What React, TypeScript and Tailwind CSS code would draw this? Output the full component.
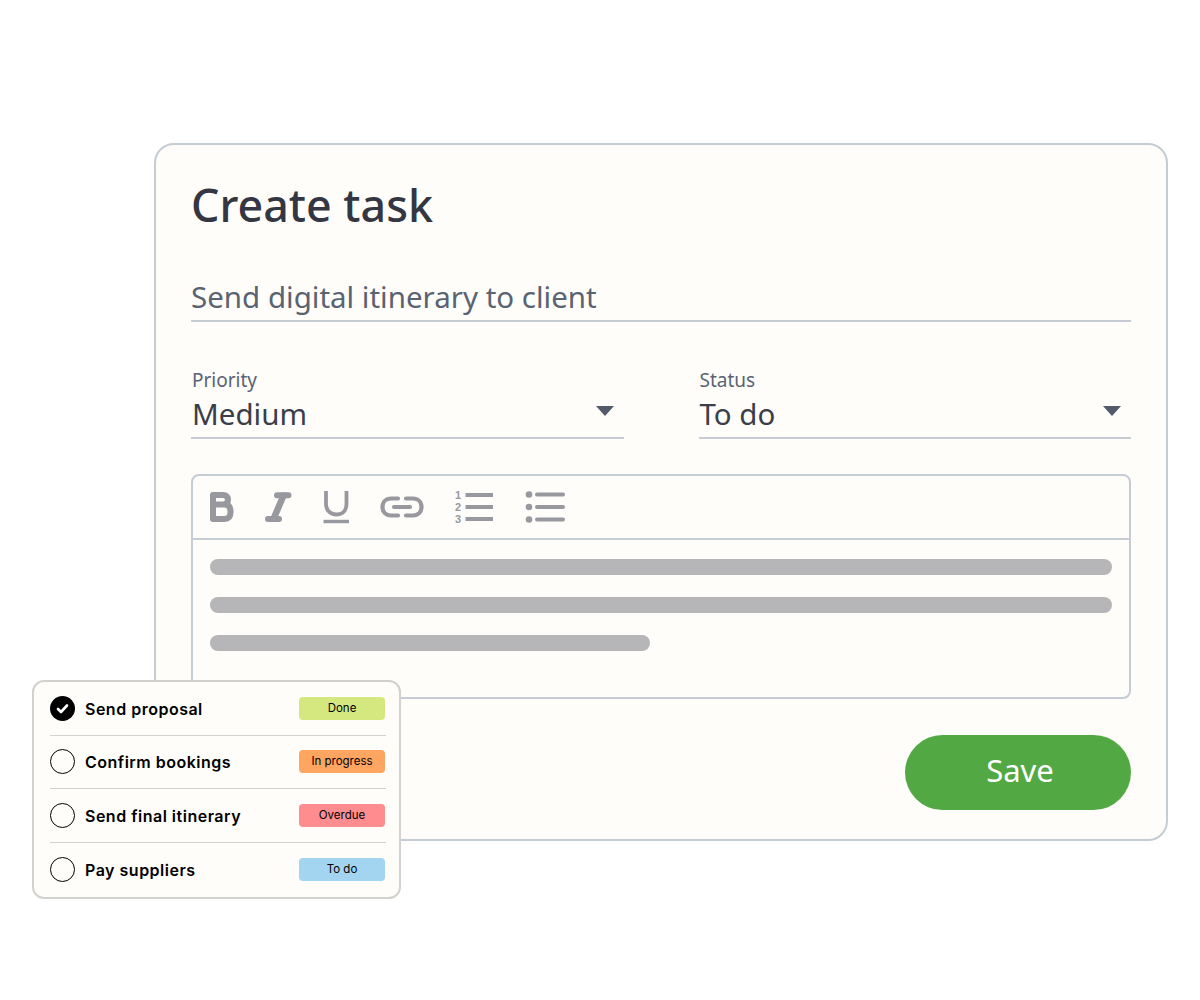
const iconColor = "#98989f";

function BoldIcon() {
  return (
    <svg width="24" height="30" viewBox="0 0 24 30" fill="none" stroke={iconColor} strokeWidth="6" strokeLinejoin="round">
      <path d="M3 3H13C16.5 3 18 5 18 7.8C18 10.6 16.2 12.6 13 12.6H3ZM3 12.6H14.5C18.5 12.6 20.6 15 20.6 19.8C20.6 24.6 18.4 27 14.5 27H3Z" />
    </svg>
  );
}

function ItalicIcon() {
  return (
    <svg width="27" height="30" viewBox="0 0 27 30" fill="none" stroke={iconColor} strokeLinecap="round">
      <path d="M12 3.2H23.5M3 27H14" strokeWidth="6" />
      <path d="M18.5 3.5L8.5 27" strokeWidth="6.5" />
    </svg>
  );
}

function UnderlineIcon() {
  return (
    <svg width="27" height="33" viewBox="0 0 27 33" fill="none" stroke={iconColor} strokeWidth="3.8">
      <path d="M3 0V13C3 19.5 7.5 23.5 13.5 23.5C19.5 23.5 23.5 19.5 23.5 13V0" />
      <path d="M0.5 30.5H26" strokeWidth="3.4" />
    </svg>
  );
}

function LinkIcon() {
  return (
    <svg width="44" height="22" viewBox="0 0 44 22" fill="none" stroke={iconColor} strokeWidth="4.2" strokeLinecap="round">
      <path d="M18 2.5H11C6 2.5 2.5 6 2.5 11C2.5 16 6 19.5 11 19.5H18" />
      <path d="M26 2.5H33C38 2.5 41.5 6 41.5 11C41.5 16 38 19.5 33 19.5H26" />
      <path d="M14 11H30" />
    </svg>
  );
}

function OrderedIcon() {
  return (
    <svg width="40" height="34" viewBox="0 0 40 34" fill="none" stroke={iconColor} strokeWidth="4">
      <path d="M11.5 5H39M11.5 17H39M11.5 29H39" />
      <g fill={iconColor} stroke="none" fontFamily="'Liberation Sans', sans-serif" fontWeight="700" fontSize="11" textAnchor="middle">
        <text x="4" y="9">1</text>
        <text x="4" y="21">2</text>
        <text x="4" y="33">3</text>
      </g>
    </svg>
  );
}

function BulletIcon() {
  return (
    <svg width="40" height="34" viewBox="0 0 40 34" fill="none" stroke={iconColor} strokeWidth="4" strokeLinecap="round">
      <path d="M12 4.5H38M12 17H38M12 29.5H38" />
      <g fill={iconColor} stroke="none">
        <circle cx="4" cy="4.5" r="3.3" />
        <circle cx="4" cy="17" r="3.3" />
        <circle cx="4" cy="29.5" r="3.3" />
      </g>
    </svg>
  );
}

function SelectField({ label, value }: { label: string; value: string }) {
  return (
    <div className="relative h-[72px] flex-1 border-b-2 border-[#c5ccd3]">
      <div className="pl-px pt-px text-[19px] leading-6 text-[#5a6371]">{label}</div>
      <div className="pl-px pt-px text-[29.5px] leading-[42px] text-[#3b3e4a]">{value}</div>
      <div className="absolute right-[10px] top-[39px] h-0 w-0 border-x-[9px] border-t-[10px] border-x-transparent border-t-[#535b6b]" />
    </div>
  );
}

const tasks = [
  { name: "Send proposal", status: "Done", color: "bg-[#d5e87f]", done: true },
  { name: "Confirm bookings", status: "In progress", color: "bg-[#ffa562]", done: false },
  { name: "Send final itinerary", status: "Overdue", color: "bg-[#ff8c8e]", done: false },
  { name: "Pay suppliers", status: "To do", color: "bg-[#a4d5f0]", done: false },
];

function TaskList() {
  return (
    <div className="absolute left-[32px] top-[680px] flex h-[219px] w-[369px] flex-col rounded-[12px] border-2 border-[#d3d1ce] bg-[#fefdfa] pl-[16px] pr-[13px] font-['Inter',sans-serif]">
      {tasks.map((t, i) => (
        <div
          key={t.name}
          className={
            i < 3
              ? "flex h-[53.5px] items-center border-b-[1.5px] border-[#d3d1ce]"
              : "flex h-[53.5px] items-center"
          }
        >
          {t.done ? (
            <div className="flex h-[25px] w-[25px] items-center justify-center rounded-full bg-black">
              <svg width="15" height="15" viewBox="0 0 15 15" fill="none" stroke="white" strokeWidth="2.6" strokeLinecap="round" strokeLinejoin="round">
                <path d="M3 8L6 11L12 4.5" />
              </svg>
            </div>
          ) : (
            <div className="h-[25px] w-[25px] rounded-full border-[1.5px] border-black" />
          )}
          <div className="ml-[10px] flex-1 pt-px text-[16px] font-semibold tracking-[0.5px] text-black">{t.name}</div>
          <div className={`mr-px flex h-[23px] w-[86px] items-center justify-center rounded-[4px] text-[11.5px] text-black ${t.color}`}>
            {t.status}
          </div>
        </div>
      ))}
    </div>
  );
}

export default function App() {
  return (
    <div className="relative h-[1000px] w-[1200px] overflow-hidden bg-white pt-[143px] pl-[154px] font-['Noto_Sans',sans-serif]">
      <div className="h-[698px] w-[1014px] rounded-[20px] border-2 border-[#c5ccd3] bg-[#fefdfa] px-[35px] pt-[32px]">
        <h1 className="text-[44.8px] font-medium leading-[56px] text-[#343642]">Create task</h1>
        <div className="mt-[41px] h-[48px] border-b-2 border-[#c5ccd3] pt-px text-[29.5px] leading-[44px] text-[#5a6371]">
          Send digital itinerary to client
        </div>
        <div className="mt-[45px] flex gap-[75px]">
          <SelectField label="Priority" value="Medium" />
          <SelectField label="Status" value="To do" />
        </div>
        <div className="mt-[35px] h-[225px] rounded-[8px] border-2 border-[#c5ccd3]">
          <div className="flex h-[64px] items-center border-b-2 border-[#c5ccd3] pl-[17px]">
            <BoldIcon />
            <div className="ml-[31px]"><ItalicIcon /></div>
            <div className="ml-[31px]"><UnderlineIcon /></div>
            <div className="ml-[30px]"><LinkIcon /></div>
            <div className="ml-[30px]"><OrderedIcon /></div>
            <div className="ml-[31px]"><BulletIcon /></div>
          </div>
          <div className="flex flex-col gap-[22px] px-[17px] pt-[19px]">
            <div className="h-[16px] rounded-full bg-[#b6b6b8]" />
            <div className="h-[16px] rounded-full bg-[#b6b6b8]" />
            <div className="h-[16px] w-[440px] rounded-full bg-[#b6b6b8]" />
          </div>
        </div>
        <div className="mt-[36px] flex justify-end">
          <div className="flex h-[75px] w-[226px] items-center justify-center rounded-full bg-[#52a944] pb-1 pl-1 text-[31px] text-white">
            Save
          </div>
        </div>
      </div>
      <TaskList />
    </div>
  );
}
